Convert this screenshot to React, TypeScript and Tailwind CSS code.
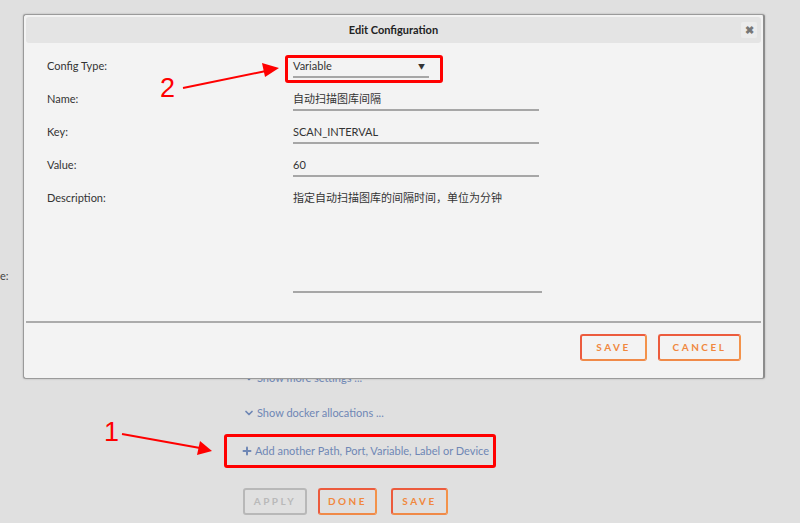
import { ChevronDown, Plus } from 'lucide-react';

const font = { fontFamily: 'Lato, "Noto Sans CJK SC", sans-serif' };

function OrangeButton({ label, w, className = '' }: { label: string; w: string; className?: string }) {
  return (
    <button
      className={`${w} ${className} h-[27px] rounded-[3px] border-2 border-[#ec5b3d] border-r-[#f3924a] border-b-[#f08a48] bg-transparent text-[10px] font-bold tracking-[2.5px] text-[#f0883e]`}
    >
      {label}
    </button>
  );
}

function Field({ label, value, line, tall }: { label: string; value: string; line: string; tall?: boolean }) {
  return (
    <div className={`flex ${tall ? 'h-[105px]' : 'h-[33px]'}`}>
      <div className="w-[246px] text-[11px] leading-[16px] text-[#333]">{label}</div>
      <div className={`flex ${line} flex-col`}>
        <div className="text-[11px] leading-[16px] text-[#333]">{value}</div>
        {tall ? <div className="h-[85px]" /> : <div className="h-[2px]" />}
        <div className="h-[2px] bg-[#a6a6a6]" />
      </div>
    </div>
  );
}

export default function App() {
  return (
    <div className="relative h-[523px] w-[800px] overflow-hidden bg-[#e0e0e0]" style={font}>
      {/* page behind the dialog */}
      <div className="absolute left-0 top-[268px] text-[11px] text-[#444]">e:</div>
      <div className="flex flex-col pl-[243px] pt-[368px]">
        <div className="flex h-[20px] items-center gap-[2px] text-[11px] text-[#6f87b5]">
          <ChevronDown size={12} strokeWidth={3.5} className="shrink-0" />
          <span>Show more settings ...</span>
        </div>
        <div className="mt-[15px] flex h-[20px] items-center gap-[2px] text-[11px] text-[#6f87b5]">
          <ChevronDown size={12} strokeWidth={3.5} className="shrink-0" />
          <span>Show docker allocations ...</span>
        </div>
        <div className="ml-[-19px] mt-[11px] flex h-[34px] w-[272px] items-center gap-[2px] whitespace-nowrap rounded-[3px] border-[3px] border-[#ff0000] pl-[14px] text-[11px] text-[#6f87b5]">
          <Plus size={12} strokeWidth={4} className="shrink-0" />
          <span>Add another Path, Port, Variable, Label or Device</span>
        </div>
        <div className="mt-[20px] flex gap-[11px]">
          <button className="h-[27px] w-[64px] rounded-[3px] border-2 border-[#b8b8b8] text-[10px] font-bold tracking-[2.5px] text-[#b9b9b9]">
            APPLY
          </button>
          <OrangeButton label="DONE" w="w-[59px]" />
          <OrangeButton label="SAVE" w="w-[57px]" className="ml-[3px]" />
        </div>
      </div>

      {/* dialog */}
      <div className="absolute left-[23px] top-[14px] flex h-[365px] w-[742px] flex-col rounded-[3px] border border-[#9a9a9a] border-r-2 border-r-[#8c8c8c] bg-[#f3f3f3] p-[2px] shadow-[0_0_2px_rgba(0,0,0,0.25)]">
        <div className="relative flex h-[26px] items-center justify-center rounded-[3px] bg-[#e4e4e4] text-[11px] font-bold text-[#222]">
          Edit Configuration
          <div className="absolute right-[4px] top-[5px] flex h-[16px] w-[16px] items-center justify-center rounded-[2px] bg-[#ececec] text-[11px] text-[#777]">
            ✖
          </div>
        </div>
        <div className="flex flex-col pl-[21px] pt-[15px]">
          <div className="flex h-[33px]">
            <div className="w-[246px] text-[11px] leading-[16px] text-[#333]">Config Type:</div>
            <div className="flex w-[136px] flex-col">
              <div className="flex items-center justify-between text-[11px] leading-[16px] text-[#333]">
                <span>Variable</span>
                <span className="pr-[4px] text-[7px]">▼</span>
              </div>
              <div className="mt-[2px] h-[2px] bg-[#a6a6a6]" />
            </div>
          </div>
          <Field label="Name:" value="自动扫描图库间隔" line="w-[246px]" />
          <Field label="Key:" value="SCAN_INTERVAL" line="w-[246px]" />
          <Field label="Value:" value="60" line="w-[246px]" />
          <Field label="Description:" value="指定自动扫描图库的间隔时间，单位为分钟" line="w-[249px]" tall />
        </div>
        <div className="mt-[26px] h-[2px] bg-[#ababab]" />
        <div className="flex justify-end gap-[11px] pr-[20px] pt-[11px]">
          <OrangeButton label="SAVE" w="w-[67px]" />
          <OrangeButton label="CANCEL" w="w-[83px]" />
        </div>
      </div>

      {/* red annotation box around select */}
      <div className="absolute left-[285px] top-[55px] h-[28px] w-[158px] rounded-[3px] border-[3px] border-[#ff0000]" />

      {/* annotations */}
      <div className="absolute left-[160px] top-[75px] text-[27px] leading-none text-[#ff0000]" style={{ fontFamily: '"Liberation Sans", sans-serif' }}>
        2
      </div>
      <div className="absolute left-[104px] top-[419px] text-[27px] leading-none text-[#ff0000]" style={{ fontFamily: '"Liberation Sans", sans-serif' }}>
        1
      </div>
      <svg className="pointer-events-none absolute left-0 top-0" width="800" height="523">
        <line x1="183" y1="88" x2="266" y2="71" stroke="#ff0000" strokeWidth="2" />
        <polygon points="279,68 262,63 265,77" fill="#ff0000" />
        <line x1="122" y1="434" x2="200" y2="448" stroke="#ff0000" strokeWidth="2" />
        <polygon points="212,451 200,441 197,455" fill="#ff0000" />
      </svg>
    </div>
  );
}
